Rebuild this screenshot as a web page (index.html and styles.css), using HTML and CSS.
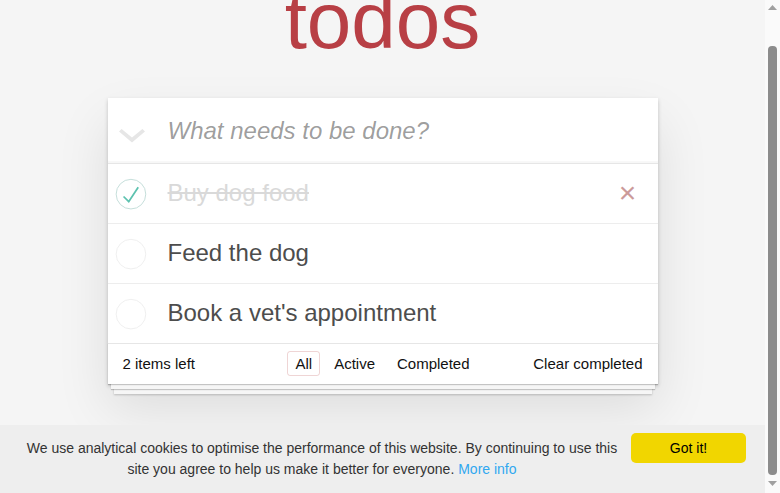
FILE: index.html
```html
<!DOCTYPE html>
<html lang="en">
<head>
<meta charset="utf-8">
<title>TodoMVC</title>
<link rel="stylesheet" href="styles.css">
</head>
<body>
<div class="viewport">
  <section class="app-wrap">
    <h1 class="title">todos</h1>
    <section class="todoapp">
      <header class="header">
        <span class="toggle-all">
          <svg width="26" height="14" viewBox="0 0 26 14"><polygon points="0,2.6 2.6,0 13,8.6 23.4,0 26,2.6 13,13.4" fill="#e6e6e6"/></svg>
        </span>
        <input class="new-todo" placeholder="What needs to be done?">
      </header>
      <ul class="todo-list">
        <li class="todo completed">
          <svg class="check" width="40" height="40" viewBox="-10 -18 100 135"><circle cx="50" cy="50" r="50" fill="none" stroke="#bddad5" stroke-width="3"/><path fill="#5dc2af" d="M72 25L42 71 27 56l-4 4 20 20 34-52z"/></svg>
          <span class="label">Buy dog food</span>
          <span class="destroy">×</span>
        </li>
        <li class="todo">
          <svg class="check" width="40" height="40" viewBox="-10 -18 100 135"><circle cx="50" cy="50" r="50" fill="none" stroke="#ededed" stroke-width="3"/></svg>
          <span class="label">Feed the dog</span>
        </li>
        <li class="todo">
          <svg class="check" width="40" height="40" viewBox="-10 -18 100 135"><circle cx="50" cy="50" r="50" fill="none" stroke="#ededed" stroke-width="3"/></svg>
          <span class="label">Book a vet's appointment</span>
        </li>
      </ul>
      <footer class="footer">
        <span class="count"><span class="num">2</span> items left</span>
        <span class="filters"><a class="selected" href="#/">All</a><a href="#/active">Active</a><a href="#/completed">Completed</a></span>
        <span class="clear">Clear completed</span>
      </footer>
    </section>
  </section>
  <div class="cookie-banner">
    <p class="cookie-msg">We use analytical cookies to optimise the performance of this website. By continuing to use this site you agree to help us make it better for everyone. <a class="more-info" href="#">More info</a></p>
    <span class="cookie-btn">Got it!</span>
  </div>
</div>
<div class="scrollbar">
  <span class="sb-arrow"><svg width="9" height="5" viewBox="0 0 9 5"><polygon points="0,5 4.5,0 9,5" fill="#a0a0a0"/></svg></span>
  <span class="sb-track"><span class="sb-thumb"></span></span>
  <span class="sb-arrow sb-down"><svg width="9" height="5" viewBox="0 0 9 5"><polygon points="0,0 9,0 4.5,5" fill="#a0a0a0"/></svg></span>
</div>
</body>
</html>
```

FILE: styles.css
```css
html, body {
  height: 100%;
  margin: 0;
}

body {
  display: flex;
  overflow: hidden;
  background: #f5f5f5;
  font: 14px/1.4em "Liberation Sans", Arial, sans-serif;
  color: #4d4d4d;
}

.viewport {
  flex: 1;
  min-width: 0;
  position: relative;
  overflow: hidden;
}

.title {
  margin: -19px 0 37px;
  font-size: 80px;
  line-height: 80px;
  font-weight: 200;
  text-align: center;
  color: #b83f45;
}

.todoapp {
  width: 550px;
  margin: 0 auto;
  background: #fff;
  box-shadow: 0 2px 4px 0 rgba(0, 0, 0, 0.2), 0 25px 50px 0 rgba(0, 0, 0, 0.1);
}

.header {
  display: flex;
  height: 65px;
  box-shadow: inset 0 -2px 1px rgba(0, 0, 0, 0.03);
}

.toggle-all {
  width: 60px;
  flex: none;
  box-sizing: border-box;
  display: flex;
  align-items: center;
  padding: 10px 0 0 11px;
}

.toggle-all svg {
  display: block;
}

.new-todo {
  flex: 1;
  min-width: 0;
  height: 65px;
  box-sizing: border-box;
  border: 0;
  outline: 0;
  padding: 0 16px 0 0;
  background: transparent;
  font-family: inherit;
  font-size: 24px;
  color: #4d4d4d;
}

.new-todo::placeholder {
  font-style: italic;
  color: rgba(0, 0, 0, 0.4);
}

.todo-list {
  list-style: none;
  margin: 0;
  padding: 0;
  border-top: 1px solid #e6e6e6;
}

.todo {
  display: flex;
  align-items: center;
  height: 59px;
  border-bottom: 1px solid #ededed;
  font-size: 24px;
}

.todo:last-child {
  border-bottom: 0;
}

.check {
  flex: none;
  display: block;
}

.label {
  flex: 1;
  margin-left: 20px;
  line-height: 1.2;
  color: #4d4d4d;
}

.completed .label {
  color: #d9d9d9;
  text-decoration: line-through;
}

.destroy {
  width: 40px;
  height: 40px;
  margin-right: 10px;
  font-size: 30px;
  line-height: 38px;
  text-align: center;
  color: #cc9a9a;
}

.footer {
  display: grid;
  grid-template-columns: 1fr auto 1fr;
  align-items: center;
  height: 20px;
  padding: 10px 15px;
  line-height: 20px;
  font-size: 15px;
  color: #111;
  border-top: 1px solid #e6e6e6;
  box-shadow: 0 1px 1px rgba(0, 0, 0, 0.2),
    0 8px 0 -3px #f6f6f6,
    0 9px 1px -3px rgba(0, 0, 0, 0.2),
    0 16px 0 -6px #f6f6f6,
    0 17px 2px -6px rgba(0, 0, 0, 0.2);
}

.filters a {
  margin: 0 3px;
  padding: 3px 7px;
  border: 1px solid transparent;
  border-radius: 3px;
  color: inherit;
  text-decoration: none;
}

.filters a.selected {
  border-color: rgba(175, 47, 47, 0.2);
}

.clear {
  justify-self: end;
}

.cookie-banner {
  position: absolute;
  left: 0;
  right: 0;
  bottom: 0;
  display: flex;
  align-items: flex-start;
  padding: 8px 19px 0 0;
  background: #eeeeee;
  font-size: 14px;
  line-height: 21px;
  color: #333;
}

.cookie-msg {
  flex: 1;
  margin: 0;
  padding: 5px 2px 13px 15px;
  text-align: center;
}

.more-info {
  color: #31a8f0;
  text-decoration: none;
}

.cookie-btn {
  flex: none;
  width: 115px;
  height: 30px;
  line-height: 30px;
  border-radius: 5px;
  background: #f1d600;
  color: #000;
  text-align: center;
}

.scrollbar {
  width: 15px;
  flex: none;
  display: flex;
  flex-direction: column;
  background: #fafafa;
}

.sb-arrow {
  height: 15px;
  flex: none;
  display: flex;
  align-items: center;
  justify-content: center;
}

.sb-arrow svg {
  display: block;
}

.sb-down {
  align-items: flex-start;
  padding-top: 3px;
  box-sizing: border-box;
}

.sb-track {
  flex: 1;
  padding-top: 31px;
}

.sb-thumb {
  display: block;
  height: 429px;
  margin: 0 3px;
  border-radius: 4px;
  background: #8c8c8c;
}
```
